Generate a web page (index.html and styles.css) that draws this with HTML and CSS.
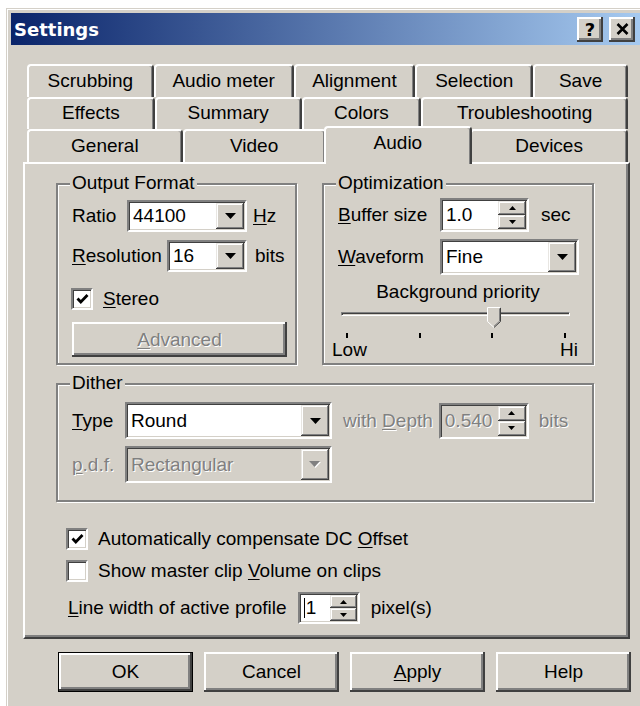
FILE: index.html
```html
<!DOCTYPE html>
<html>
<head>
<meta charset="utf-8">
<title>Settings</title>
<link rel="stylesheet" href="styles.css">
</head>
<body>
<div class="window">
  <div class="titlebar">
    <span class="title">Settings</span>
    <div class="caption-btns">
      <span class="cbtn raised">?</span>
      <span class="cbtn raised"><svg width="13" height="12" viewBox="0 0 13 12"><path d="M1.5 1l10 10M11.5 1l-10 10" stroke="#000" stroke-width="2.6"/></svg></span>
    </div>
  </div>

  <div class="dialog">
    <div class="tabs">
      <div class="tab-row">
        <div class="tab" style="width:127px">Scrubbing</div>
        <div class="tab" style="width:140px">Audio meter</div>
        <div class="tab" style="width:122px">Alignment</div>
        <div class="tab" style="width:118px">Selection</div>
        <div class="tab" style="width:95px">Save</div>
      </div>
      <div class="tab-row">
        <div class="tab" style="width:128px">Effects</div>
        <div class="tab" style="width:147px">Summary</div>
        <div class="tab" style="width:120px">Colors</div>
        <div class="tab" style="width:207px">Troubleshooting</div>
      </div>
      <div class="tab-row">
        <div class="tab" style="width:156px">General</div>
        <div class="tab" style="width:143px">Video</div>
        <div class="tab sel" style="width:149px">Audio</div>
        <div class="tab" style="width:158px">Devices</div>
      </div>
    </div>

    <div class="panel">
      <div class="top-groups">
        <div class="group output">
          <div class="gtitle">Output Format</div>
          <div class="row r-ratio">
            <div class="field">
              <span>Ratio</span>
              <div class="combo sunken w120">
                <span class="val">44100</span>
                <span class="ddbtn raised-sm"><svg width="11" height="6" viewBox="0 0 11 6"><path d="M0 0h11L5.5 6z"/></svg></span>
              </div>
            </div>
            <span class="unit u-hz"><u>H</u>z</span>
          </div>
          <div class="row r-res">
            <div class="field">
              <span><u>R</u>esolution</span>
              <div class="combo sunken w80">
                <span class="val">16</span>
                <span class="ddbtn raised-sm"><svg width="11" height="6" viewBox="0 0 11 6"><path d="M0 0h11L5.5 6z"/></svg></span>
              </div>
            </div>
            <span class="unit u-bits">bits</span>
          </div>
          <div class="row r-stereo">
            <span class="check sunken"><svg width="13" height="12" viewBox="0 0 13 12"><polyline points="1.5,5.5 4.8,9 11.5,2" fill="none" stroke="#000" stroke-width="2.8"/></svg></span>
            <span class="clabel"><u>S</u>tereo</span>
          </div>
          <div class="btn raised advanced disabled"><span><u>A</u>dvanced</span></div>
        </div>

        <div class="group optim">
          <div class="gtitle">Optimization</div>
          <div class="row r-buffer">
            <span class="olabel"><u>B</u>uffer size</span>
            <div class="spin sunken w89">
              <span class="val">1.0</span>
              <span class="arrows">
                <span class="sbtn raised-sm"><svg width="7" height="4" viewBox="0 0 7 4"><path d="M0 4h7L3.5 0z"/></svg></span>
                <span class="sbtn raised-sm"><svg width="7" height="4" viewBox="0 0 7 4"><path d="M0 0h7L3.5 4z"/></svg></span>
              </span>
            </div>
            <span class="unit u-sec">sec</span>
          </div>
          <div class="row r-wave">
            <span class="olabel"><u>W</u>aveform</span>
            <div class="combo sunken w139">
              <span class="val">Fine</span>
              <span class="ddbtn raised-sm"><svg width="11" height="6" viewBox="0 0 11 6"><path d="M0 0h11L5.5 6z"/></svg></span>
            </div>
          </div>
          <div class="bgp">Background priority</div>
          <div class="slider">
            <div class="track"></div>
            <div class="ticks"><i></i><i></i><i></i><i></i></div>
            <svg class="thumb" width="14" height="21" viewBox="0 0 14 21">
              <path d="M0.5 0.5h13v14l-6.5 6l-6.5-6z" fill="#d4d0c8"/>
              <path d="M12.5 1.5v12.6l-5.5 5.1" fill="none" stroke="#808080" stroke-width="1"/>
              <path d="M13.5 0.5v14l-6.5 6" fill="none" stroke="#404040" stroke-width="1"/>
              <path d="M7 20.5l-6.5-6v-14h13" fill="none" stroke="#fff" stroke-width="1"/>
            </svg>
          </div>
          <div class="scale-labels"><span>Low</span><span>Hi</span></div>
        </div>
      </div>

      <div class="group dither">
        <div class="gtitle">Dither</div>
        <div class="row r-type">
          <span class="dlabel"><u>T</u>ype</span>
          <div class="combo sunken w207">
            <span class="val">Round</span>
            <span class="ddbtn raised-sm"><svg width="11" height="6" viewBox="0 0 11 6"><path d="M0 0h11L5.5 6z"/></svg></span>
          </div>
          <span class="disabled-text depth">with <u>D</u>epth</span>
          <div class="spin sunken w90 off">
            <span class="val">0.540</span>
            <span class="arrows">
              <span class="sbtn raised-sm"><svg width="7" height="4" viewBox="0 0 7 4"><path d="M0 4h7L3.5 0z"/></svg></span>
              <span class="sbtn raised-sm"><svg width="7" height="4" viewBox="0 0 7 4"><path d="M0 0h7L3.5 4z"/></svg></span>
            </span>
          </div>
          <span class="disabled-text u-dbits">bits</span>
        </div>
        <div class="row r-pdf">
          <span class="dlabel disabled-text"><u>p</u>.d.f.</span>
          <div class="combo sunken w207 off">
            <span class="val">Rectangular</span>
            <span class="ddbtn raised-sm"><svg width="12" height="7" viewBox="0 0 12 7"><path d="M1 1h11L6.5 7z" fill="#fff"/><path d="M0 0h11L5.5 6z" fill="#808080"/></svg></span>
          </div>
        </div>
      </div>

      <div class="options">
        <div class="row r-auto">
          <span class="check sunken"><svg width="13" height="12" viewBox="0 0 13 12"><polyline points="1.5,5.5 4.8,9 11.5,2" fill="none" stroke="#000" stroke-width="2.8"/></svg></span>
          <span class="clabel">Automatically compensate DC <u>O</u>ffset</span>
        </div>
        <div class="row r-show">
          <span class="check sunken"></span>
          <span class="clabel">Show master clip <u>V</u>olume on clips</span>
        </div>
        <div class="row r-line">
          <span><u>L</u>ine width of active profile</span>
          <div class="spin sunken w62">
            <span class="val"><i class="caret"></i>1</span>
            <span class="arrows">
              <span class="sbtn raised-sm"><svg width="7" height="4" viewBox="0 0 7 4"><path d="M0 4h7L3.5 0z"/></svg></span>
              <span class="sbtn raised-sm"><svg width="7" height="4" viewBox="0 0 7 4"><path d="M0 0h7L3.5 4z"/></svg></span>
            </span>
          </div>
          <span class="unit u-px">pixel(s)</span>
        </div>
      </div>
    </div>

    <div class="buttons">
      <div class="btn raised default">OK</div>
      <div class="btn raised">Cancel</div>
      <div class="btn raised"><span><u>A</u>pply</span></div>
      <div class="btn raised">Help</div>
    </div>
  </div>
</div>
</body>
</html>
```

FILE: styles.css
```css
* { box-sizing: border-box; }

body {
  margin: 0;
  background: #fff;
  overflow: hidden;
  font-family: "Liberation Sans", Arial, sans-serif;
  font-size: 19px;
  color: #000;
}

u { text-underline-offset: 2px; text-decoration-thickness: 1px; }

/* window frame */
.window {
  margin: 8px 0 0 6px;
  width: 640px;
  height: 720px;
  padding: 5px;
  background: #d4d0c8;
  box-shadow: inset 1px 1px 0 #d4d0c8, inset 2px 2px 0 #fff;
}

.titlebar {
  height: 32px;
  display: flex;
  align-items: center;
  justify-content: space-between;
  padding: 0 6px 0 3px;
  background: linear-gradient(to right, #0a246a, #a6caf0);
}

.title {
  color: #fff;
  font: bold 18px "DejaVu Sans", sans-serif;
}

.caption-btns { display: flex; gap: 6px; }

.cbtn {
  width: 26px;
  height: 25px;
  display: flex;
  align-items: center;
  justify-content: center;
  font: bold 18px "DejaVu Sans", sans-serif;
}

/* 3D bevels */
.raised {
  background: #d4d0c8;
  box-shadow: inset -2px -2px 0 #404040, inset 2px 2px 0 #fff, inset -4px -4px 0 #808080;
}

.raised-sm {
  background: #d4d0c8;
  box-shadow: inset -1px -1px 0 #404040, inset 1px 1px 0 #e8e6e2, inset -2px -2px 0 #808080, inset 2px 2px 0 #fff;
}

.sunken {
  border: 2px solid;
  border-color: #808080 #fff #fff #808080;
  box-shadow: inset 1px 1px 0 #404040, inset -1px -1px 0 #d4d0c8;
  padding: 1px;
  background: #fff;
}

/* tabs */
.dialog { padding: 19px 0 0 12px; }

.tabs { margin-left: 4px; width: 601px; }

.tab-row { display: flex; height: 33px; }
.tab-row + .tab-row { height: 32px; }
.tab-row:last-child { height: 33px; }

.tab {
  height: 100%;
  background: #d4d0c8;
  border-top: 2px solid #fff;
  border-left: 2px solid #fff;
  border-right: 2px solid #404040;
  box-shadow: inset -1px 0 0 #808080;
  border-radius: 4px 4px 0 0;
  display: flex;
  align-items: center;
  justify-content: center;
  padding-bottom: 2px;
}

.tab.sel {
  position: relative;
  z-index: 1;
  height: 38px;
  margin: -3px -2px -2px -2px;
  padding: 0 0 7px 0;
}

.panel {
  width: 607px;
  height: 477px;
  border-top: 2px solid #fff;
  border-left: 2px solid #fff;
  border-right: 2px solid #404040;
  border-bottom: 2px solid #404040;
  box-shadow: inset -2px -2px 0 #808080;
  padding: 19px 0 0 31px;
}

/* group boxes */
.top-groups { display: flex; gap: 25px; height: 182px; }

.group {
  border: 2px solid #808080;
  box-shadow: inset 1px 1px 0 #fff, 1px 1px 0 #fff;
  padding: 0 0 0 14px;
}

.output { width: 241px; }
.optim { width: 272px; }
.dither { width: 538px; height: 119px; margin-top: 18px; }

.gtitle {
  display: table;
  margin: -12px 0 0 -2px;
  padding: 0 2px;
  line-height: 20px;
  background: #d4d0c8;
}

.row { display: flex; align-items: center; }

.field { display: flex; align-items: center; width: 175px; }
.field .combo { margin-left: auto; }

.r-ratio { margin-top: 7px; height: 32px; }
.r-res { margin-top: 8px; height: 32px; }
.r-stereo { margin-top: 16px; height: 22px; margin-left: -1px; }

.u-hz { margin-left: 6px; }
.u-bits { margin-left: 8px; }
.u-sec { margin-left: 12px; }
.u-px { margin-left: 11px; }

.combo {
  display: flex;
  height: 32px;
}
.combo .val, .spin .val {
  flex: 1;
  display: flex;
  align-items: center;
  padding-left: 3px;
}

.ddbtn {
  width: 28px;
  display: flex;
  align-items: center;
  justify-content: center;
}

.w80 { width: 80px; }
.w120 { width: 120px; }
.w139 { width: 139px; }
.w207 { width: 207px; }
.w89 { width: 89px; }
.w90 { width: 90px; }
.w62 { width: 62px; }

.spin { display: flex; }
.spin .arrows {
  width: 28px;
  display: flex;
  flex-direction: column;
}
.w62 .arrows { width: 27px; }
.sbtn {
  flex: 1;
  display: flex;
  align-items: center;
  justify-content: center;
}

.combo.off, .spin.off { background: #d4d0c8; }
.off .val { color: #808080; text-shadow: 1px 1px 0 #fff; }

.check {
  width: 22px;
  height: 22px;
  display: flex;
  align-items: center;
  justify-content: center;
}
.clabel { margin-left: 10px; }

.btn {
  display: flex;
  align-items: center;
  justify-content: center;
}

.advanced {
  width: 215px;
  height: 35px;
  margin-top: 12px;
}

.disabled, .disabled-text {
  color: #808080;
  text-shadow: 1px 1px 0 #fff;
}

/* optimization */
.olabel { width: 102px; }
.r-buffer { margin-top: 5px; height: 34px; }
.r-wave { margin-top: 7px; height: 36px; }
.r-wave .combo { height: 36px; }
.r-buffer .spin { height: 34px; }

.bgp {
  margin: 7px 0 0 -14px;
  text-align: center;
  line-height: 20px;
}

.slider {
  position: relative;
  height: 38px;
  width: 246px;
  margin-left: -6px;
}
.track {
  position: absolute;
  left: 9px;
  right: 8px;
  top: 10px;
  height: 4px;
  border-top: 1px solid #808080;
  border-left: 1px solid #808080;
  border-bottom: 1px solid #fff;
  border-right: 1px solid #fff;
  box-shadow: inset 1px 1px 0 #404040;
}
.ticks {
  position: absolute;
  left: 14px;
  right: 12px;
  top: 31px;
  display: flex;
  justify-content: space-between;
}
.ticks i { width: 2px; height: 5px; background: #000; }
.thumb { position: absolute; left: 155px; top: 5px; }

.scale-labels {
  display: flex;
  justify-content: space-between;
  width: 246px;
  margin-left: -6px;
  line-height: 20px;
}

/* dither */
.dlabel { width: 53px; }
.r-type { margin-top: 9px; height: 37px; }
.r-type .combo { height: 37px; }
.r-type .spin { height: 36px; margin-left: 6px; }
.depth { margin-left: 11px; }
.u-dbits { margin-left: 10px; }
.r-pdf { margin-top: 7px; height: 37px; }
.r-pdf .combo { height: 37px; }

/* lower options */
.options { margin-left: 10px; }
.r-auto { margin-top: 26px; height: 22px; }
.r-show { margin-top: 10px; height: 22px; }
.r-line { margin-top: 10px; height: 32px; margin-left: 2px; }
.r-line .spin { height: 32px; margin-left: 11px; }

.caret {
  display: inline-block;
  width: 1px;
  height: 20px;
  background: #000;
  margin-right: 1px;
}

/* dialog buttons */
.buttons {
  display: flex;
  gap: 11px;
  margin: 13px 0 0 35px;
}
.buttons .btn { width: 135px; height: 40px; }
.btn.default {
  box-shadow: inset 0 0 0 1px #000, inset -3px -3px 0 #404040, inset 3px 3px 0 #fff, inset -5px -5px 0 #808080;
}
```
